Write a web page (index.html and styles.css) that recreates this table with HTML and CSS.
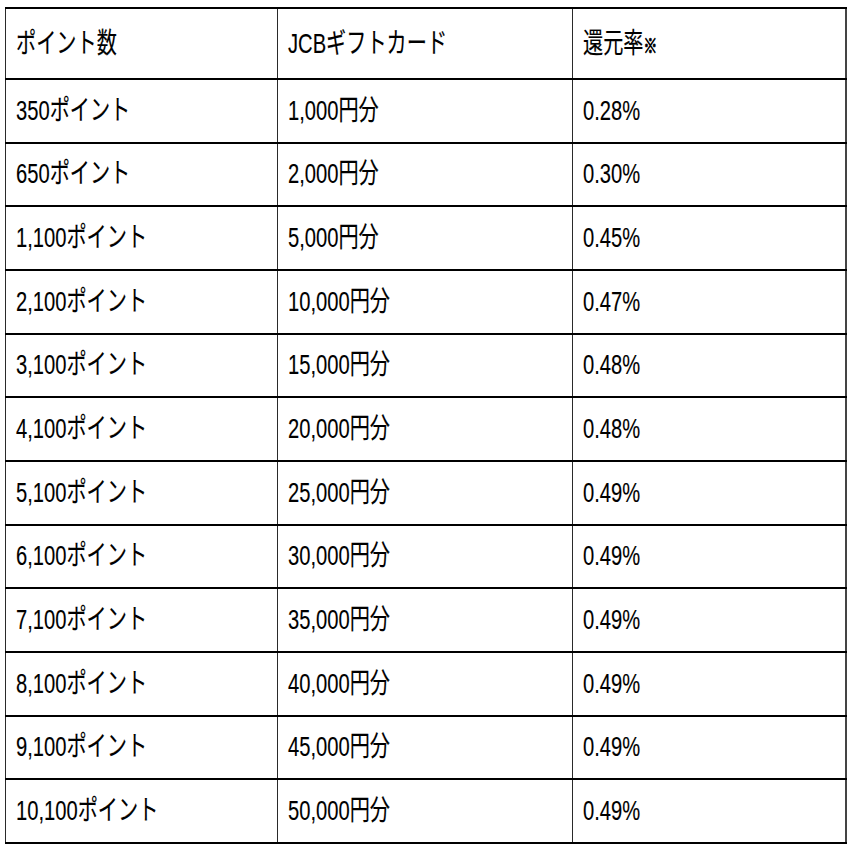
FILE: index.html
```html
<!DOCTYPE html>
<html lang="ja">
<head>
<meta charset="utf-8">
<title>JCBギフトカード 交換表</title>
<link rel="stylesheet" href="styles.css">
</head>
<body>
<table class="rate-table">
  <colgroup>
    <col class="col-points">
    <col class="col-card">
    <col class="col-rate">
  </colgroup>
  <thead>
    <tr class="head-row">
      <th><span class="txt">ポイント数</span></th>
      <th><span class="txt">JCBギフトカード</span></th>
      <th><span class="txt">還元率<span class="mark">※</span></span></th>
    </tr>
  </thead>
  <tbody>
    <tr><td><span class="txt">350ポイント</span></td><td><span class="txt">1,000円分</span></td><td><span class="txt">0.28%</span></td></tr>
    <tr><td><span class="txt">650ポイント</span></td><td><span class="txt">2,000円分</span></td><td><span class="txt">0.30%</span></td></tr>
    <tr><td><span class="txt">1,100ポイント</span></td><td><span class="txt">5,000円分</span></td><td><span class="txt">0.45%</span></td></tr>
    <tr><td><span class="txt">2,100ポイント</span></td><td><span class="txt">10,000円分</span></td><td><span class="txt">0.47%</span></td></tr>
    <tr><td><span class="txt">3,100ポイント</span></td><td><span class="txt">15,000円分</span></td><td><span class="txt">0.48%</span></td></tr>
    <tr><td><span class="txt">4,100ポイント</span></td><td><span class="txt">20,000円分</span></td><td><span class="txt">0.48%</span></td></tr>
    <tr><td><span class="txt">5,100ポイント</span></td><td><span class="txt">25,000円分</span></td><td><span class="txt">0.49%</span></td></tr>
    <tr><td><span class="txt">6,100ポイント</span></td><td><span class="txt">30,000円分</span></td><td><span class="txt">0.49%</span></td></tr>
    <tr><td><span class="txt">7,100ポイント</span></td><td><span class="txt">35,000円分</span></td><td><span class="txt">0.49%</span></td></tr>
    <tr><td><span class="txt">8,100ポイント</span></td><td><span class="txt">40,000円分</span></td><td><span class="txt">0.49%</span></td></tr>
    <tr><td><span class="txt">9,100ポイント</span></td><td><span class="txt">45,000円分</span></td><td><span class="txt">0.49%</span></td></tr>
    <tr><td><span class="txt">10,100ポイント</span></td><td><span class="txt">50,000円分</span></td><td><span class="txt">0.49%</span></td></tr>
  </tbody>
</table>
</body>
</html>
```

FILE: styles.css
```css
html, body {
  margin: 0;
  padding: 0;
  background: #ffffff;
}

body {
  padding: 7px 0 0 5px;
  font-family: "Liberation Sans", "Noto Sans CJK JP", sans-serif;
  color: #000000;
}

.rate-table {
  width: 840px;
  table-layout: fixed;
  border-collapse: collapse;
  border-left: 1px solid #333333;
  border-right: 2px solid #444444;
}

.col-points { width: 272px; }
.col-card { width: 295px; }
.col-rate { width: 273px; }

.rate-table th,
.rate-table td {
  padding: 0 0 0 10px;
  text-align: left;
  font-weight: normal;
  white-space: nowrap;
  overflow: hidden;
  border-top: 2px solid #000000;
  border-bottom: 2px solid #000000;
  border-left: 1px solid #2a2a2a;
  border-right: 1px solid #2a2a2a;
  vertical-align: middle;
  font-size: 28px;
  line-height: 1;
}

.head-row {
  height: 71px;
}

.rate-table tbody tr {
  height: 63.67px;
}

.txt {
  display: inline-block;
  transform: scaleX(0.72);
  transform-origin: left center;
  line-height: 1;
  -webkit-text-stroke: 0.15px #000000;
}

.mark {
  font-family: "Noto Sans CJK JP", sans-serif;
  font-size: 19px;
  font-weight: bold;
  -webkit-text-stroke: 0.9px #000000;
}
```
